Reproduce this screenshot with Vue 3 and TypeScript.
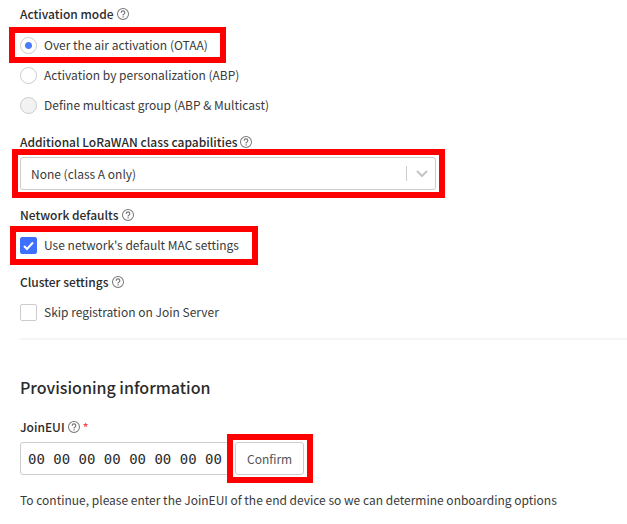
<script setup lang="ts">
import { defineComponent, h, ref } from 'vue'

interface ActivationOption {
  value: string
  label: string
  disabled?: boolean
  marked?: boolean
}

const activationOptions: ActivationOption[] = [
  { value: 'otaa', label: 'Over the air activation (OTAA)', marked: true },
  { value: 'abp', label: 'Activation by personalization (ABP)' },
  { value: 'multicast', label: 'Define multicast group (ABP & Multicast)', disabled: true },
]

const activation = ref('otaa')
const deviceClass = ref('class-a')
const defaultMac = ref(true)
const skipJoin = ref(false)
const joinEui = ref('00 00 00 00 00 00 00 00')

const HelpIcon = defineComponent({
  render: () =>
    h('svg', { width: 12, height: 12, viewBox: '0 0 24 24', fill: 'currentColor', 'aria-hidden': 'true' }, [
      h('path', {
        d: 'M11 19h2.400v-2.400h-2.400v2.400zm1-19a12 12 0 1 0 0 24 12 12 0 0 0 0-24zm0 22a10 10 0 1 1 0-20 10 10 0 0 1 0 20zm0-17.500a4.800 4.800 0 0 0-4.800 4.800h2.400a2.400 2.400 0 0 1 4.800 0c0 2.400-3.600 2.100-3.600 5.900h2.400c0-2.600 3.600-2.900 3.600-5.900A4.800 4.800 0 0 0 12 4.500z',
      }),
    ]),
})
</script>

<template>
  <form class="form" @submit.prevent>
    <fieldset class="group modes">
      <legend class="title">Activation mode<HelpIcon class="help" /></legend>
      <div v-for="option in activationOptions" :key="option.value" class="row">
        <label class="choice" :class="{ marked: option.marked, 'mark-radio': option.marked }">
          <input
            v-model="activation"
            class="radio"
            type="radio"
            name="activation"
            :value="option.value"
            :disabled="option.disabled"
          />
          <span>{{ option.label }}</span>
        </label>
      </div>
    </fieldset>

    <div class="group">
      <label class="title" for="device-class">Additional LoRaWAN class capabilities<HelpIcon class="help" /></label>
      <div class="select marked mark-select">
        <select id="device-class" v-model="deviceClass">
          <option value="class-a">None (class A only)</option>
          <option value="class-b">Class B</option>
          <option value="class-c">Class C</option>
        </select>
        <span class="indicator">
          <svg width="12" height="8" viewBox="0 0 12 8" aria-hidden="true">
            <path d="M1.5 1.5 6 6l4.500-4.500" fill="none" stroke="currentColor" stroke-width="2" stroke-linecap="round" />
          </svg>
        </span>
      </div>
    </div>

    <fieldset class="group">
      <legend class="title">Network defaults<HelpIcon class="help" /></legend>
      <div class="row">
        <label class="choice marked mark-check">
          <input v-model="defaultMac" class="check" type="checkbox" />
          <svg class="tick" width="17" height="17" viewBox="0 0 17 17" aria-hidden="true">
            <path d="M4 9l3 3 6-6.500" fill="none" stroke="currentColor" stroke-width="2" />
          </svg>
          <span>Use network's default MAC settings</span>
        </label>
      </div>
    </fieldset>

    <fieldset class="group">
      <legend class="title">Cluster settings<HelpIcon class="help" /></legend>
      <div class="row">
        <label class="choice">
          <input v-model="skipJoin" class="check" type="checkbox" />
          <span>Skip registration on Join Server</span>
        </label>
      </div>
    </fieldset>

    <hr class="divider" />

    <h2 class="heading">Provisioning information</h2>

    <div class="group">
      <label class="title" for="join-eui">JoinEUI<HelpIcon class="help" /><span class="required">*</span></label>
      <div class="eui">
        <input id="join-eui" v-model="joinEui" class="eui-input" type="text" />
        <span class="marked mark-button">
          <button class="button" type="submit">Confirm</button>
        </span>
      </div>
    </div>

    <p class="note">To continue, please enter the JoinEUI of the end device so we can determine onboarding options</p>
  </form>
</template>

<style>
body {
  background: #fff;
}
</style>

<style scoped>
.form {
  padding: 4px 0 12px 20px;
  font: 12px/20px 'Noto Sans CJK SC', 'Noto Sans', sans-serif;
  color: #3a3a3a;
}

.group {
  min-width: 0;
  margin: 0 0 12px;
  padding: 0;
  border: 0;
}

.title {
  display: flex;
  align-items: center;
  margin-bottom: 5px;
  padding: 0;
  font-weight: 500;
  color: #2b2b2b;
}

.modes .title {
  margin-bottom: 6px;
}

.help {
  margin-left: 3px;
  color: #777;
}

.required {
  margin-left: 3px;
  color: #f44;
}

.row {
  display: flex;
  height: 30px;
  align-items: center;
}

.choice {
  display: flex;
  align-items: center;
  gap: 7px;
}

.radio,
.check {
  appearance: none;
  box-sizing: border-box;
  width: 17px;
  height: 17px;
  margin: 0;
  border: 1px solid #ccc;
  background: #fff;
}

.radio {
  border-radius: 50%;
}

.radio:checked {
  background: radial-gradient(circle, #4b7bff 3px, #fff 4px);
}

.radio:disabled {
  background: #f2f2f2;
}

.check {
  border-radius: 2px;
}

.check:checked {
  border-color: #3d70ff;
  background: #3d70ff;
}

.tick {
  position: absolute;
  left: 0;
  color: #fff;
  visibility: hidden;
}

.check:checked + .tick {
  visibility: visible;
}

.select {
  display: flex;
  max-width: 416px;
  margin-bottom: 15px;
}

.select select {
  appearance: none;
  box-sizing: border-box;
  width: 100%;
  height: 33px;
  padding: 0 40px 0 10px;
  border: 1px solid #ccc;
  border-radius: 3px;
  background: #fff;
  font: inherit;
  color: inherit;
}

.indicator {
  position: absolute;
  top: 9px;
  right: 0;
  display: flex;
  height: 15px;
  width: 29px;
  align-items: center;
  justify-content: center;
  border-left: 1px solid #ccc;
  color: #c4c4c4;
  pointer-events: none;
}

.divider {
  height: 2px;
  margin: -1px 0 35px;
  border: 0;
  background: #f5f5f5;
}

.heading {
  margin: 0 0 18px;
  font-size: 16px;
  line-height: 24px;
  font-weight: 500;
  color: #2b2b2b;
}

.eui {
  display: flex;
  gap: 5px;
  margin-bottom: 15px;
}

.eui-input,
.button {
  box-sizing: border-box;
  height: 33px;
  border: 1px solid #ccc;
  border-radius: 3px;
  background: #fff;
}

.eui-input {
  width: 210px;
  padding: 0 7px;
  font: 14px 'DejaVu Sans Mono', monospace;
  color: #2b2b2b;
}

.button {
  padding: 0 11px;
  font: inherit;
  color: #555;
}

.note {
  margin: 0;
}

/* Red frames that point out the settings to use */
.marked {
  position: relative;
}

.marked::after {
  content: '';
  position: absolute;
  border: 6px solid #f00;
  pointer-events: none;
}

.mark-radio::after {
  inset: -8px -18px -8px -11px;
}

.mark-select::after {
  inset: -8px -9px -8px -8px;
}

.mark-check::after {
  inset: -9px -19px -10px -10px;
}

.mark-button::after {
  inset: -8px -9px -8px -8px;
}
</style>
